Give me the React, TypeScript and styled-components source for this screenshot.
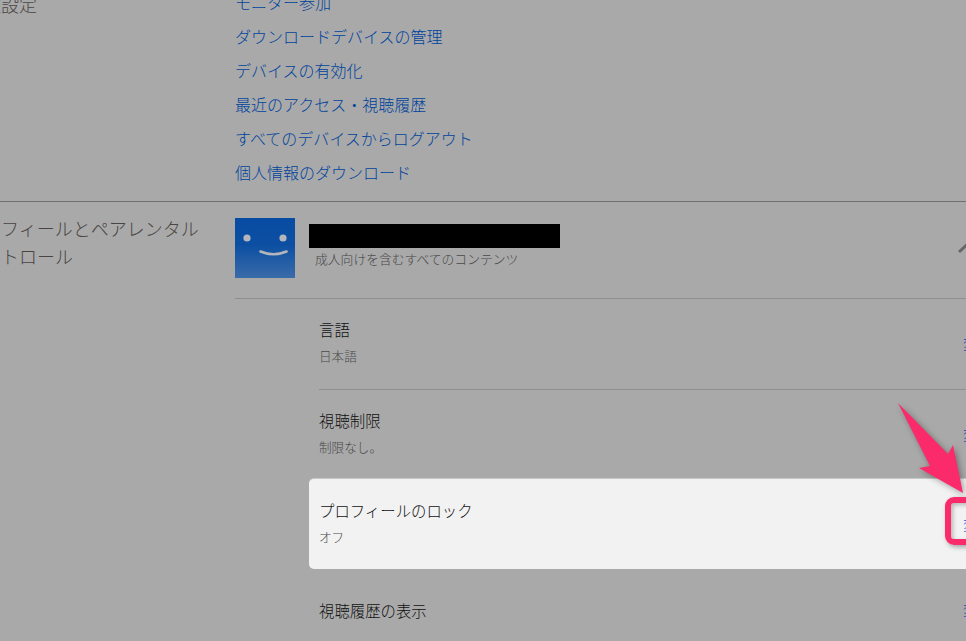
import React from "react";
import styled, { createGlobalStyle } from "styled-components";

const links = [
  "モニター参加",
  "ダウンロードデバイスの管理",
  "デバイスの有効化",
  "最近のアクセス・視聴履歴",
  "すべてのデバイスからログアウト",
  "個人情報のダウンロード",
];

const settings = [
  { label: "言語", value: "日本語", divider: true },
  { label: "視聴制限", value: "制限なし。" },
  { label: "プロフィールのロック", value: "オフ", active: true },
  { label: "視聴履歴の表示" },
];

export default function App() {
  return (
    <>
      <GlobalStyle />
      <Viewport>
        <Page>
          <SettingsSection>
            <SectionLabel $top={5}>各種設定</SectionLabel>
            <LinkList>
              {links.map((text) => (
                <TextLink key={text}>{text}</TextLink>
              ))}
            </LinkList>
          </SettingsSection>
          <ProfileSection>
            <SectionLabel $top={12}>プロフィールとペアレンタルコントロール</SectionLabel>
            <div>
              <ProfileHeader>
                <Avatar>
                  <svg width="60" height="60" viewBox="0 0 60 60">
                    <circle cx="12" cy="20" r="3.6" fill="#b4b6bc" />
                    <circle cx="48" cy="20" r="3.6" fill="#b4b6bc" />
                    <path d="M25.5 33.5 Q38.5 39 51.5 33.5" fill="none" stroke="#b4b6bc" strokeWidth="2.6" strokeLinecap="round" />
                  </svg>
                </Avatar>
                <ProfileInfo>
                  <Redacted />
                  <Maturity>成人向けを含むすべてのコンテンツ</Maturity>
                </ProfileInfo>
                <Chevron width="20" height="12" viewBox="0 0 20 12">
                  <path d="M2 10 L10 2.5 L18 10" fill="none" stroke="#666" strokeWidth="3" />
                </Chevron>
              </ProfileHeader>
              <SettingList>
                {settings.map((item) => (
                  <SettingRow key={item.label} $active={item.active} $divider={item.divider}>
                    <div>
                      <SettingLabel>{item.label}</SettingLabel>
                      {item.value && <SettingValue>{item.value}</SettingValue>}
                    </div>
                    <ChangeLink $active={item.active}>変更</ChangeLink>
                  </SettingRow>
                ))}
              </SettingList>
            </div>
          </ProfileSection>
        </Page>
        <Callout>
          <ArrowMark width="966" height="641" viewBox="0 0 966 641">
            <polygon points="898,403 948,454 953,445 963,493 919,468 930,466" fill="#fb2a6a" />
          </ArrowMark>
          <FocusBox />
        </Callout>
      </Viewport>
    </>
  );
}

const GlobalStyle = createGlobalStyle`
  html, body {
    margin: 0;
    padding: 0;
    background: #a9a9a9;
  }
  body {
    font-family: "Noto Sans CJK JP", "Liberation Sans", sans-serif;
    font-weight: 300;
  }
`;

const Viewport = styled.div`
  position: relative;
  width: 966px;
  height: 641px;
  overflow: hidden;
  background: #a9a9a9;
`;

const Page = styled.div`
  width: 1026px;
  margin: -15px 0 0 -34px;
`;

const SettingsSection = styled.section`
  display: grid;
  grid-template-columns: 269px 757px;
  height: 217px;
  box-sizing: border-box;
  border-bottom: 1px solid #6f6f6f;
`;

const ProfileSection = styled.section`
  display: grid;
  grid-template-columns: 269px 757px;
`;

const SectionLabel = styled.div<{ $top: number }>`
  width: 250px;
  margin-left: -1px;
  padding-top: ${(p) => p.$top}px;
  font-size: 18px;
  line-height: 28px;
  color: #4a4543;
`;

const LinkList = styled.div`
  display: flex;
  flex-direction: column;
`;

const TextLink = styled.a`
  font-size: 16px;
  line-height: 34px;
  color: #00439c;
`;

const ProfileHeader = styled.div`
  display: flex;
  align-items: flex-start;
  height: 97px;
  box-sizing: border-box;
  padding-top: 16px;
  border-bottom: 1px solid #8f8f8f;
`;

const Avatar = styled.div`
  width: 60px;
  height: 60px;
  flex: none;
  background: linear-gradient(#074ca3 0%, #0c4fa2 45%, #3a6ba9 100%);

  svg {
    display: block;
  }
`;

const ProfileInfo = styled.div`
  margin: 6px 0 0 14px;
  flex: 1;
`;

const Redacted = styled.div`
  width: 251px;
  height: 24px;
  background: #000;
`;

const Maturity = styled.div`
  margin: 0 0 0 6px;
  font-size: 12.8px;
  line-height: 22px;
  color: #484848;
`;

const Chevron = styled.svg`
  flex: none;
  margin: 24px 15px 0 0;
`;

const SettingList = styled.div`
  margin-left: 84px;
`;

const SettingRow = styled.div<{ $active?: boolean; $divider?: boolean }>`
  display: flex;
  align-items: flex-start;
  justify-content: space-between;
  padding: 18px 0 16px;

  ${(p) =>
    p.$divider &&
    `
    padding-bottom: 18px;
    border-bottom: 1px solid #8f8f8f;
  `}

  ${(p) =>
    p.$active &&
    `
    margin: 0 0 11px -10px;
    padding: 19px 0 17px 10px;
    background: #f2f2f2;
    border-top: 1px solid #c8c8c8;
    border-radius: 5px;
  `}
`;

const SettingLabel = styled.div`
  font-size: 15.4px;
  line-height: 24px;
  color: #111;
`;

const SettingValue = styled.div`
  font-size: 12.6px;
  line-height: 30px;
  color: #4a4a4a;
`;

const ChangeLink = styled.a<{ $active?: boolean }>`
  align-self: center;
  width: 29px;
  margin-bottom: 3px;
  font-size: 14px;
  line-height: 20px;
  color: ${(p) => (p.$active ? "#1a4fe6" : "#1c32b8")};
`;

const Callout = styled.div`
  position: absolute;
  inset: 0;
  pointer-events: none;
`;

const ArrowMark = styled.svg`
  position: absolute;
  left: 0;
  top: 0;
  filter: drop-shadow(2px 2px 3px rgba(0, 0, 0, 0.35));
`;

const FocusBox = styled.div`
  position: absolute;
  left: 945px;
  top: 497px;
  width: 60px;
  height: 48px;
  box-sizing: border-box;
  border: 6px solid #fb2a6a;
  border-radius: 9px;
  box-shadow: 2px 2px 5px rgba(0, 0, 0, 0.35), inset 2px 2px 4px rgba(0, 0, 0, 0.25);
`;
